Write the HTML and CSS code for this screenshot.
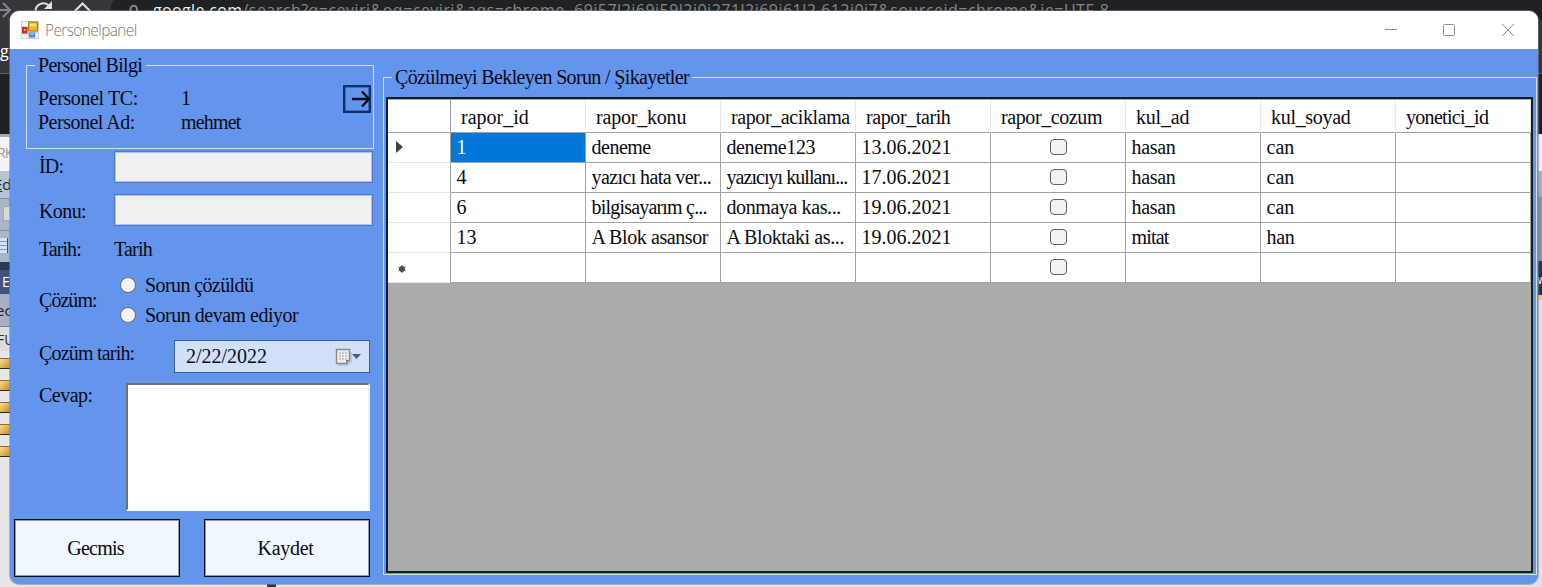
FILE: index.html
```html
<!DOCTYPE html>
<html lang="tr">
<head>
<meta charset="utf-8">
<title>Personelpanel</title>
<link rel="stylesheet" href="styles.css">
</head>
<body>
<div class="desktop" aria-hidden="true">
  <div class="browser">
    <svg class="nav" width="100" height="18" viewBox="0 0 100 18" fill="none" stroke="#dfe1e4" stroke-width="2">
      <path d="M0 10h9M3 3l7 7l-7 7" stroke="#85878a"/>
      <path d="M35.500 12a8 8 0 0 1 13.500-6.500" />
      <path d="M44 9h8V1z" fill="#dfe1e4" stroke="none"/>
      <path d="M74 12l8.500-8.500l8.500 8.500"/>
    </svg>
    <div class="omnibox">
      <svg width="12" height="16" viewBox="0 0 12 16" fill="none" stroke="#85878a" stroke-width="2"><path d="M2.500 9V5a3 3 0 0 1 6.500 0v4"/><path d="M0 7h12v9H0z" fill="#85878a" stroke="none"/></svg>
      <span class="url"><b>google.com</b>/search?q=ceviri&amp;oq=ceviri&amp;aqs=chrome..69i57l2j69i59l2j0i271l2j69i61l2.612j0j7&amp;sourceid=chrome&amp;ie=UTF-8</span>
    </div>
  </div>
  <div class="edge left">
    <div class="dark tab">g</div>
    <div class="dark page"></div>
    <div class="white">RK</div>
    <div class="menu"><span><u>E</u>d</span></div>
    <div class="tool"><i class="sheet"></i></div>
    <div class="tool"><i class="table"></i></div>
    <div class="navy"></div>
    <div class="navy tabname">E</div>
    <div class="steel">ec</div>
    <div class="fu">FU</div>
    <div class="folders"><i></i><i></i><i></i><i></i><i></i></div>
  </div>
  <div class="edge right">
    <div class="dark tab"></div>
    <div class="dark page"></div>
    <div class="white"></div>
    <div class="steel"></div>
    <div class="navy">w</div>
    <div class="yellow"></div>
  </div>
  <div class="under"></div>
</div>

<main class="window">
  <header class="titlebar">
    <svg class="appicon" width="18" height="18" viewBox="0 0 18 18">
      <path d="M0 0h18v18H0z" fill="#d3d3d3"/><path d="M1 1h6v4H1zM1 13h6v4H1zM15 12h2v5h-2z" fill="#f6f6f6"/>
      <path d="M1 6h5.500v6.500H1z" fill="#c53027"/><path d="M3 8h2v2H3z" fill="#ee8d80"/>
      <path d="M7.500 1h9v9h-9z" fill="#f0b51e" stroke="#a57c14"/><path d="M9 2.500h6v3H9z" fill="#fbdc70"/>
      <path d="M8 11.500h6v5H8z" fill="#4b8ce8"/><path d="M9 12h4v2H9z" fill="#84b5f7"/>
    </svg>
    <h1>Personelpanel</h1>
    <svg class="controls" width="132" height="14" viewBox="0 0 132 14" fill="none" stroke="#8f8f8f">
      <path d="M1 6.500h12"/><rect x="59.500" y="1.500" width="11" height="11" rx="1"/><path d="M118 1l12 12M130 1l-12 12"/>
    </svg>
  </header>
  <div class="client">
    <section class="side">
      <div class="group person">
        <h2 class="k7">Personel Bilgi</h2>
        <dl>
          <dt class="k4">Personel TC:</dt><dd>1</dd>
          <dt class="k5">Personel Ad:</dt><dd class="k8">mehmet</dd>
        </dl>
        <svg class="exit" width="28" height="28" viewBox="0 0 28 28" fill="none"><rect x="1.200" y="1.200" width="25.600" height="25.600" stroke="#0d2f70" stroke-width="2.400"/><path d="M9 14h17M19 6.500l7 7.500l-7 7.500" stroke="#0a0f1c" stroke-width="2.400"/></svg>
      </div>
      <div class="row id"><label class="k8">İD:</label><div class="box"></div></div>
      <div class="row konu"><label class="k6">Konu:</label><div class="box"></div></div>
      <div class="row tarih"><label class="k9">Tarih:</label><span class="k8">Tarih</span></div>
      <div class="row cozum"><label class="k9">Çözüm:</label>
        <div class="radios"><span class="k6"><i></i>Sorun çözüldü</span><span class="k5"><i></i>Sorun devam ediyor</span></div>
      </div>
      <div class="row when"><label class="k8">Çozüm tarih:</label>
        <div class="date">2/22/2022
          <svg width="27" height="18" viewBox="0 0 27 18"><path d="M3 17h10l3-3V4" fill="none" stroke="#7183a2" stroke-opacity=".5"/><path d="M1.500 1.500h13v11l-3 3h-10z" fill="#ececec" stroke="#8d8a86" stroke-width="1.400"/><path d="M4 4h8v8H4z" fill="#c1c5cb"/><path d="M4 6.500h8M4 9.500h8M6.500 4v8M9.500 4v8" stroke="#f2f2f2"/><path d="M11 15v-3h3z" fill="#777"/><path d="M17 6h9l-4.500 5z" fill="#415f94"/></svg>
        </div>
      </div>
      <div class="row answer"><label class="k5">Cevap:</label><div class="memo"></div></div>
      <div class="buttons"><button class="k8">Gecmis</button><button class="k3">Kaydet</button></div>
    </section>

    <section class="group reports">
      <h2>Çözülmeyi Bekleyen Sorun / Şikayetler</h2>
      <div class="grid">
        <div class="tr head"><span></span><span>rapor_id</span><span class="k2">rapor_konu</span><span class="k4">rapor_aciklama</span><span class="k4">rapor_tarih</span><span class="k4">rapor_cozum</span><span class="k2">kul_ad</span><span class="k3">kul_soyad</span><span class="k7">yonetici_id</span></div>
        <div class="tr"><span><svg width="7" height="12" viewBox="0 0 7 12"><path d="M0 0l7 6l-7 6z" fill="#404040"/></svg></span><span class="sel">1</span><span class="k5">deneme</span><span class="k4">deneme123</span><span>13.06.2021</span><span class="chk"><i></i></span><span class="k3">hasan</span><span>can</span><span></span></div>
        <div class="tr"><span></span><span>4</span><span class="k6">yazıcı hata ver...</span><span class="k9">yazıcıyı kullanı...</span><span>17.06.2021</span><span class="chk"><i></i></span><span class="k3">hasan</span><span>can</span><span></span></div>
        <div class="tr"><span></span><span>6</span><span class="k8">bilgisayarım ç...</span><span class="k4">donmaya kas...</span><span>19.06.2021</span><span class="chk"><i></i></span><span class="k3">hasan</span><span>can</span><span></span></div>
        <div class="tr"><span></span><span>13</span><span class="k4">A Blok asansor</span><span class="k4">A Bloktaki as...</span><span>19.06.2021</span><span class="chk"><i></i></span><span class="k8">mitat</span><span class="k3">han</span><span></span></div>
        <div class="tr"><span><svg class="star" width="8" height="8" viewBox="0 0 8 8" stroke="#505050"><circle cx="4" cy="4" r="2.600" fill="#505050"/><path d="M4 0v8M.5 2l7 4M.5 6l7-4"/></svg></span><span></span><span></span><span></span><span></span><span class="chk"><i></i></span><span></span><span></span><span></span></div>
      </div>
    </section>
  </div>
</main>
</body>
</html>
```
FILE: styles.css
```css
* { box-sizing: border-box; }
body {
  display: flow-root; margin: 0; width: 1542px; height: 587px; overflow: hidden; position: relative;
  background: #e4e4e4; color: #0b0b12;
  font: 20px/24px "Liberation Serif", serif;
}
h1, h2, dl, dd { margin: 0; font-weight: normal; }
i { display: block; }

.k2 { letter-spacing: -.2px; }
.k3 { letter-spacing: -.3px; }
.k4 { letter-spacing: -.4px; }
.k5 { letter-spacing: -.5px; }
.k6 { letter-spacing: -.6px; }
.k7 { letter-spacing: -.7px; }
.k8 { letter-spacing: -.8px; }
.k9 { letter-spacing: -.95px; }

/* Applications behind the window */
.desktop { position: absolute; inset: 0; overflow: hidden; font: 16px/20px "Open Sans", sans-serif; }
.browser { display: flex; height: 20px; background: #35363a; overflow: hidden; }
.nav { flex: none; }
.omnibox { flex: 1; display: flex; margin: -6px 0 0 10px; padding: 9px 0 0 18px; background: #202124; border-radius: 18px 0 0 18px; height: 36px; }
.omnibox svg { flex: none; margin-top: 1px; }
.url { margin: -3px 0 0 13px; color: #85878a; white-space: nowrap; letter-spacing: .48px; }
.url b { color: #f1f1f1; font-weight: normal; letter-spacing: .35px; }
.edge { position: absolute; top: 20px; bottom: 0; overflow: hidden; display: flex; flex-direction: column; background: #e6e6e6; }
.left { left: 0; width: 20px; }
.right { right: 0; width: 14px; padding-left: 10px; background: #e2dfdd; }
.edge > div { flex: none; white-space: nowrap; }
.edge .dark.tab { height: 54px; background: #35363a; border-bottom: 1px solid #606164; color: #fff; padding-top: 21px; }
.edge .dark.page { height: 60px; background: #202124; }
.left .white { height: 37px; background: #f3f3f3; color: #9b9b9b; padding: 6px 0 0; margin-left: -3px; border-top: 3px solid #aaa; font-size: 14px; letter-spacing: -1px; }
.left .menu { height: 27px; background: #b8c3d6; color: #222; padding-top: 3px; font-size: 15px; }
.menu span { margin-left: -6px; }
.left .tool { height: 32px; background: #aab5c8; border-top: 1px solid #7f8da5; padding-top: 7px; }
.sheet { width: 14px; height: 15px; margin-left: 3px; background: #d9d9d9; border: 1px solid #aaa; }
.table { width: 8px; height: 15px; background: repeating-linear-gradient(0deg, #d4e2f6 0 3px, #7c96be 3px 4px); border-right: 1px solid #38547f; }
.left .navy { height: 8px; background: #293955; }
.left .tabname { height: 24px; background: #40547b; color: #fff; padding: 2px 0 0 2px; font-size: 14px; }
.left .steel { height: 33px; background: #a5b0c3; color: #222; padding-top: 6px; margin-left: -4px; border-bottom: 1px solid #78869d; font-size: 15px; }
.left .fu { height: 24px; padding: 3px 0 0; margin-left: -3px; color: #333; background: #ddd; font-size: 14px; }
.folders { display: grid; gap: 11px; padding-top: 7px; }
.folders i { height: 11px; border-top: 1px solid #8a6d31; border-bottom: 1px solid #33270f; background: linear-gradient(135deg, #fbdd8c, #b87a0c 80%); }
.right > div { width: 4px; }
.right .white { height: 37px; background: #eeeceb; }
.right .steel { height: 90px; background: linear-gradient(#a4afc4 0 26px, #8491aa 26px); }
.right .navy { height: 34px; background: #253654; color: #fff; padding-top: 9px; margin-left: -5px; width: 9px; font-size: 12px; }
.right .yellow { height: 5px; background: #e8ca79; }
.under { position: absolute; left: 267px; top: 584px; width: 9px; height: 3px; background: #293955; }

/* Window */
.window {
  position: relative; margin: 11px 4px 0 10px; height: 573px; overflow: hidden;
  display: flex; flex-direction: column; border-radius: 9px; background: #6495ed;
  box-shadow: 0 0 0 1px rgba(120, 130, 150, .55);
}
.titlebar { height: 38px; flex: none; display: flex; align-items: center; padding: 0 22px 0 11px; background: #fff; }
.titlebar h1 { flex: 1; margin: -1px 0 0 6px; font: 15.500px/20px "Open Sans", sans-serif; font-weight: 300; letter-spacing: -.62px; color: #777; }
.client { flex: 1; display: grid; grid-template-columns: 373px 1154px; }

.group { border: 1px solid #d3dcea; }
.group h2 { width: max-content; background: #6495ed; font-size: 20px; line-height: 24px; }

.side { display: flex; flex-direction: column; }
.person { margin: 16px 9px 0 16px; height: 84px; display: grid; grid-template-columns: 1fr 28px; grid-template-rows: 19px 1fr; padding-right: 2px; }
.person h2 { grid-column: 1 / 3; margin: -13px 0 0 8px; padding: 0 4px 0 3px; }
.person dl { display: grid; grid-template-columns: 143px auto; justify-content: start; align-content: start; padding: 1px 0 0 11px; }

.row { display: flex; padding-left: 29px; flex: none; }
.row label { flex: none; }
.box { width: 259px; height: 32px; background: #f0f0f0; border: 2px solid #a9c4f2; outline: 1px solid #5079c0; outline-offset: -1px; }
.id { height: 44px; padding-top: 2px; }
.id label, .konu label { width: 75px; padding-top: 3px; }
.konu { height: 44px; padding-top: 1px; }
.konu label { padding-top: 5px; }
.tarih { height: 35px; }
.tarih label { width: 75px; }
.cozum { height: 61px; }
.cozum label { width: 81px; padding-top: 16px; }
.radios { display: grid; grid-template-rows: 30px 30px; }
.radios span { display: flex; align-items: flex-start; padding-top: 1px; }
.radios i { width: 16px; height: 16px; margin: 4px 9px 0 0; border-radius: 50%; background: #f3f3f3; border: 1px solid #686868; }
.when { height: 50px; padding-top: 7px; }
.when label { width: 135px; padding-top: 1px; }
.date { display: flex; align-items: flex-start; justify-content: space-between; width: 196px; height: 33px; padding: 3px 7px 0 11px; background: #d0dffa; border: 1px solid #3f5e96; }
.date svg { margin-top: 4px; }
.answer { height: 136px; }
.answer label { width: 87px; }
.memo { width: 244px; height: 128px; background: #fff; border: 2px solid; border-color: #707070 #eee #fff #707070; }
.buttons { display: flex; gap: 24px; padding-left: 4px; }
.buttons button { width: 166px; height: 58px; padding: 0 3px 0 0; background: #f0f8ff; border: 1px solid #080c14; outline: 1px solid rgba(10, 20, 40, .4); outline-offset: -2px; font: inherit; color: inherit; }

.reports { margin: 28px 0 9px; padding: 0 3px 1px 2px; display: flex; flex-direction: column; }
.reports h2 { margin: -13px 0 8px 6px; padding: 0 3px; letter-spacing: -.64px; height: 24px; }
.grid { flex: 1; background: #ababab; border: 2px solid #181b22; padding: 1px 0 0; }
.tr { display: grid; grid-template-columns: 63px repeat(7, 135px) 1fr; height: 30px; }
.tr > span { display: flex; align-items: center; padding: 0 0 1px 5.5px; white-space: nowrap; background: #fff; border-right: 1px solid #a2a2a2; border-bottom: 1px solid #a2a2a2; }
.tr > span:first-child { padding-left: 8px; border-bottom-color: #e5e5e5; }
.head { height: 33px; }
.head > span { border-right-color: #e8e8e8; padding: 1px 0 0 10px; }
.head > span:first-child { border-color: #a2a2a2; }
.tr > .sel { background: #0078d7; color: #fff; }
.tr > .chk { justify-content: center; padding: 0; }
.chk i { width: 17px; height: 16px; margin-top: -1px; border: 1px solid #606060; border-radius: 4px; background: #f3f3f3; }
.tr .star { margin: 4px 0 0 2px; }
```
